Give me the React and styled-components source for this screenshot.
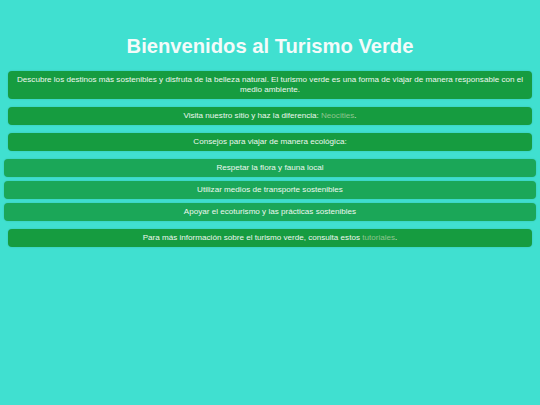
import React from 'react';
import styled, { createGlobalStyle } from 'styled-components';

const GlobalStyle = createGlobalStyle`
  html, body {
    margin: 0;
    padding: 0;
    background: #40e0d0;
    font-family: "Liberation Sans", Arial, sans-serif;
  }
`;

const Page = styled.div`
  box-sizing: border-box;
  min-height: 405px;
  background: #40e0d0;
  padding-top: 33px;
  display: flex;
  flex-direction: column;
`;

const Title = styled.h1`
  margin: 0 0 12px;
  text-align: center;
  color: #f4fbfa;
  font-size: 20.2px;
  line-height: 26px;
  font-weight: 700;
`;

const Card = styled.section`
  margin: 0 8px 8px;
  padding: 4px 8px;
  background: #169c40;
  border-radius: 4px;
  color: #eef7ef;
  font-size: 8.1px;
  line-height: 10px;
  text-align: center;
  box-shadow: 0 0 2px rgba(0, 0, 0, 0.15);
`;

const List = styled.ul`
  list-style: none;
  margin: 0 4px 8px;
  padding: 0;
  display: flex;
  flex-direction: column;
  gap: 4px;
`;

const Item = styled.li`
  padding: 4px 8px;
  background: #1ba758;
  border-radius: 4px;
  color: #eef7ef;
  font-size: 8.1px;
  line-height: 10px;
  text-align: center;
  box-shadow: 0 0 2px rgba(0, 0, 0, 0.15);
`;

const Link = styled.a`
  color: #8fc58f;
  text-decoration: none;
`;

const tips = [
  'Respetar la flora y fauna local',
  'Utilizar medios de transporte sostenibles',
  'Apoyar el ecoturismo y las prácticas sostenibles',
];

export default function App() {
  return (
    <>
      <GlobalStyle />
      <Page>
        <Title>Bienvenidos al Turismo Verde</Title>
        <Card>
          Descubre los destinos más sostenibles y disfruta de la belleza natural. El turismo verde es una forma de viajar de manera responsable con el medio ambiente.
        </Card>
        <Card>
          Visita nuestro sitio y haz la diferencia: <Link href="#">Neocities</Link>.
        </Card>
        <Card>Consejos para viajar de manera ecológica:</Card>
        <List>
          {tips.map((tip) => (
            <Item key={tip}>{tip}</Item>
          ))}
        </List>
        <Card>
          Para más información sobre el turismo verde, consulta estos <Link href="#">tutoriales</Link>.
        </Card>
      </Page>
    </>
  );
}
